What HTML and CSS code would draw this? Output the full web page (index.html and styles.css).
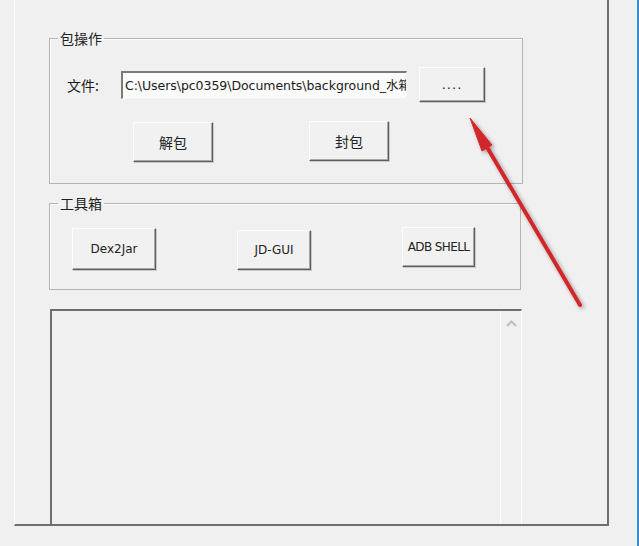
FILE: index.html
```html
<!DOCTYPE html>
<html lang="zh-CN">
<head>
  <meta charset="UTF-8">
  <title>APK 工具</title>
  <link rel="stylesheet" href="styles.css">
</head>
<body>
  <div class="screen">
    <div class="window">
      <fieldset class="group pack">
        <legend>包操作</legend>
        <div class="file-row">
          <label for="path">文件:</label>
          <div class="path-box" id="path">C:\Users\pc0359\Documents\background_水箱</div>
          <button class="btn browse">....</button>
        </div>
        <div class="pack-row">
          <button class="btn big unpack">解包</button>
          <button class="btn big repack">封包</button>
        </div>
      </fieldset>

      <fieldset class="group tools">
        <legend>工具箱</legend>
        <div class="tool-row">
          <button class="btn dex">Dex2Jar</button>
          <button class="btn jd">JD-GUI</button>
          <button class="btn adb">ADB SHELL</button>
        </div>
      </fieldset>

      <div class="log">
        <div class="log-text"></div>
        <div class="scroll">
          <svg class="up" width="11" height="7" viewBox="0 0 11 7">
            <polyline points="1,6 5.5,1.5 10,6" fill="none" stroke="#bdbdbd" stroke-width="2"/>
          </svg>
        </div>
      </div>
    </div>

    <svg class="arrow" width="639" height="546" viewBox="0 0 639 546">
      <defs>
        <filter id="shade" x="-20%" y="-20%" width="140%" height="140%">
          <feGaussianBlur in="SourceAlpha" stdDeviation="2"/>
          <feOffset dx="2" dy="2"/>
          <feComponentTransfer><feFuncA type="linear" slope="0.35"/></feComponentTransfer>
          <feMerge><feMergeNode/><feMergeNode in="SourceGraphic"/></feMerge>
        </filter>
      </defs>
      <g filter="url(#shade)" fill="#d3282b" stroke="#d3282b">
        <line x1="580" y1="305" x2="484" y2="142" stroke-width="4" stroke-linecap="round"/>
        <polygon points="470,118 492,145 482,151" stroke-width="1" stroke-linejoin="round"/>
      </g>
    </svg>
  </div>
</body>
</html>
```

FILE: styles.css
```css
* {
  box-sizing: border-box;
}
html, body {
  margin: 0;
  background: #f0f0f0;
}
body {
  font-family: 'DejaVu Sans', 'Noto Sans CJK SC', sans-serif;
  font-size: 13px;
  color: #1a1a1a;
}
.screen {
  position: relative;
  width: 639px;
  height: 546px;
  overflow: hidden;
  border-right: 2px solid #3a8bd6;
}
.window {
  margin-left: 14px;
  width: 595px;
  height: 526px;
  padding: 30px 0 0 34px;
  border-left: 1px solid #fbfbfb;
  border-right: 2px solid #6f6f6f;
  border-bottom: 2px solid #6f6f6f;
  overflow: hidden;
}

/* group boxes */
.group {
  margin: 0;
  padding: 0;
  width: 474px;
  border: 1px solid #b4b4b4;
  box-shadow: inset 1px 1px 0 #fbfbfb;
}
.group legend {
  margin-left: 8px;
  padding: 0 2px;
  font-family: 'Noto Sans CJK SC', sans-serif;
  font-size: 14px;
  line-height: 16px;
  color: #222;
}
.tools {
  margin-top: 11px;
  width: 472px;
}

/* buttons */
.btn {
  font-family: 'DejaVu Sans', 'Noto Sans CJK SC', sans-serif;
  font-size: 12px;
  color: #222;
  background: #f1f1f1;
  border: 1px solid;
  border-color: #fdfdfd #5e5e5e #5e5e5e #fdfdfd;
  box-shadow: inset -1px -1px 0 #a8a8a8, 1px 1px 0 #c9c9c9;
  padding: 0;
  margin: 0;
}
.big {
  width: 80px;
  height: 40px;
  font-family: 'Noto Sans CJK SC', sans-serif;
  font-size: 14px;
}

/* file row */
.file-row {
  display: flex;
  align-items: center;
  margin-top: 21px;
  padding-left: 17px;
}
.file-row label {
  width: 54px;
  font-family: 'Noto Sans CJK SC', sans-serif;
  font-size: 14px;
}
.path-box {
  width: 286px;
  height: 28px;
  line-height: 26px;
  padding-left: 2px;
  background: #fbfbfb;
  border-top: 2px solid #7a7a7a;
  border-left: 2px solid #7a7a7a;
  border-right: 1px solid #f4f4f4;
  border-bottom: 1px solid #f4f4f4;
  white-space: nowrap;
  overflow: hidden;
  font-size: 12.5px;
  letter-spacing: -0.05px;
}
.browse {
  width: 66px;
  height: 35px;
  margin-left: 12px;
  font-size: 13px;
  letter-spacing: 1px;
}
.pack-row {
  display: flex;
  margin-top: 20px;
  padding: 0 0 21px 83px;
}
.repack {
  margin-left: 96px;
  margin-top: -1px;
}

/* tools row */
.tool-row {
  display: flex;
  align-items: center;
  height: 42px;
  margin-top: 17px;
  margin-bottom: 19px;
  padding-left: 22px;
}
.dex {
  width: 84px;
  height: 42px;
}
.jd {
  width: 74px;
  height: 40px;
  margin-left: 81px;
  margin-top: 2px;
}
.adb {
  width: 73px;
  height: 40px;
  margin-left: 91px;
  margin-top: -4px;
  letter-spacing: -0.6px;
}

/* log area */
.log {
  display: flex;
  margin-top: 19px;
  margin-left: 1px;
  width: 472px;
  height: 216px;
  border-top: 2px solid #6e6e6e;
  border-left: 2px solid #6e6e6e;
  border-right: 1px solid #fdfdfd;
}
.log-text {
  flex: 1;
}
.scroll {
  width: 21px;
  border-left: 1px solid #fdfdfd;
  text-align: center;
}
.up {
  display: block;
  margin: 9px auto 0;
}

.arrow {
  position: absolute;
  left: 0;
  top: 0;
  pointer-events: none;
}
```
